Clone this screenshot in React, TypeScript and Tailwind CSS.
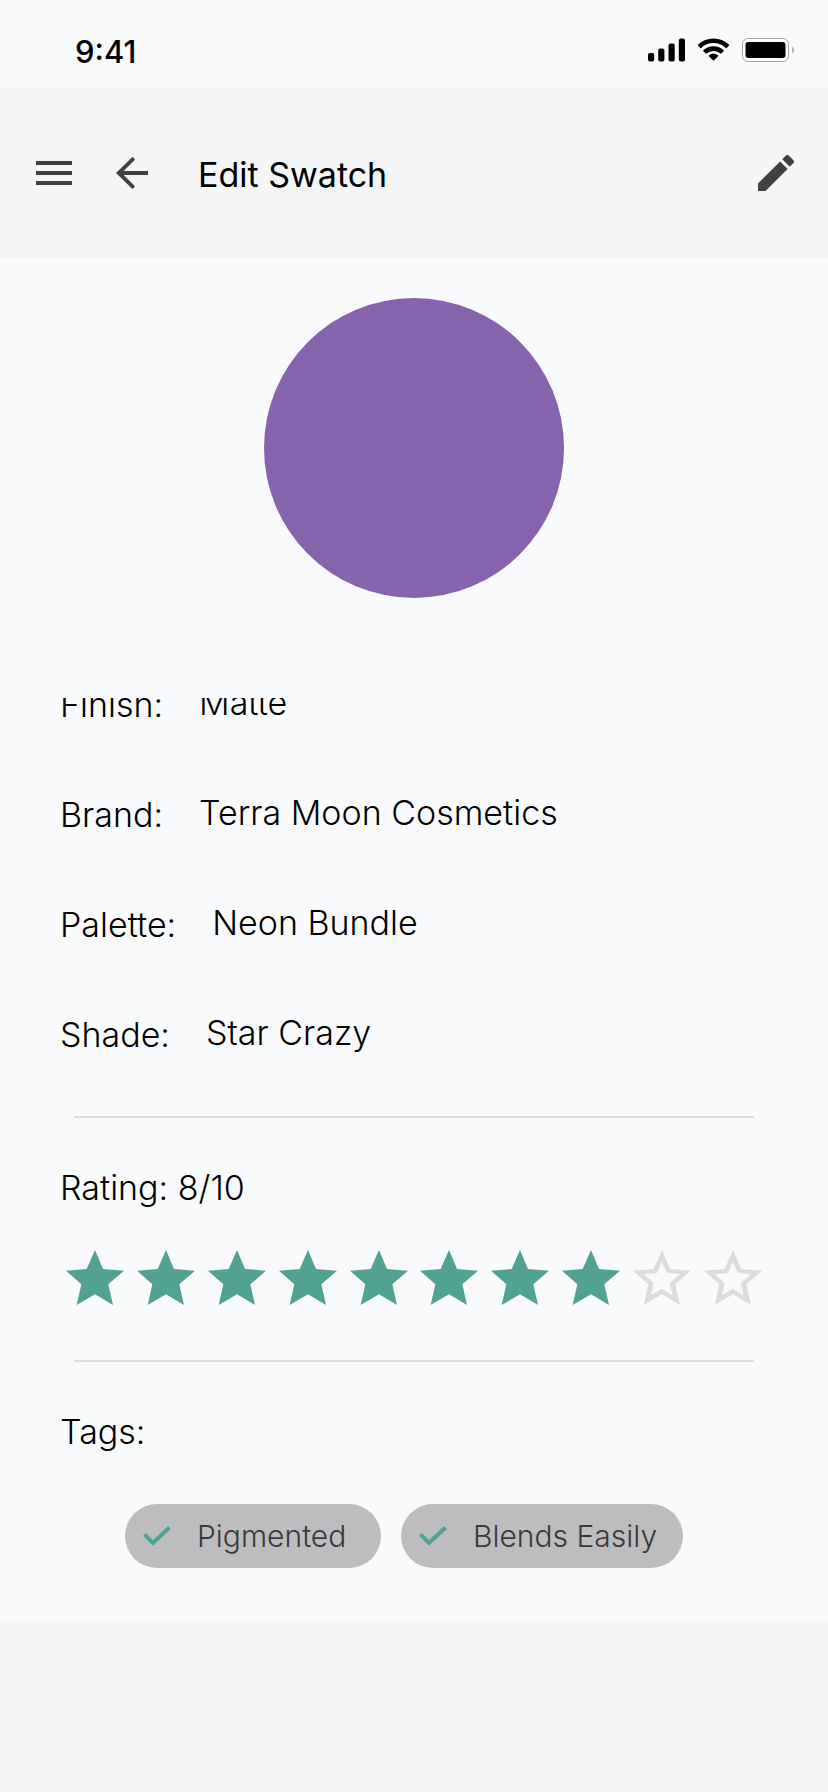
import { useState } from "react";

const STAR = "M87 0 111 57 174 62 127 103 141 165 87 133 32 165 46 103 0 62 62 57Z";
const STAR_HOLE = "M86 36 71 70 32 73 62 99 54 136 86 117 119 136 110 99 142 73 102 68Z";

const details = [
  { label: "Finish:", value: "Matte" },
  { label: "Brand:", value: "Terra Moon Cosmetics" },
  { label: "Palette:", value: "Neon Bundle" },
  { label: "Shade:", value: "Star Crazy" },
];

const tagNames = ["Pigmented", "Blends Easily"];

function Icon({ d }: { d: string }) {
  return (
    <svg viewBox="0 0 24 24" fill="currentColor" aria-hidden="true" className="size-12">
      <path d={d} />
    </svg>
  );
}

function StatusBar() {
  return (
    <div className="flex h-22 items-center justify-between pr-8 pl-[75px]">
      <span className="pt-4 text-[31px] leading-9 font-medium">9:41</span>
      <div className="flex items-center gap-3 pt-3">
        <svg viewBox="0 0 37 24" className="h-6 w-[37px]" aria-label="Signal">
          <rect x="0" y="15" width="6.2" height="8.6" rx="2" />
          <rect x="10.2" y="10.6" width="6.2" height="13" rx="2" />
          <rect x="20.5" y="5.6" width="6.2" height="18" rx="2" />
          <rect x="30.8" y="0.4" width="6.2" height="23.2" rx="2" />
        </svg>
        <svg viewBox="0.5 0 33 24" className="h-6 w-[33px]" aria-label="Wi-Fi">
          <path d="M17 5c4.700 0 9 1.800 12.300 5 .25.240.640.240.880 0l2.350-2.400a.65.65 0 0 0 0-.92 22.300 22.300 0 0 0-31.060 0 .65.65 0 0 0 0 .92L3.820 10c.240.240.63.240.88 0C8 6.800 12.300 5 17 5Z" />
          <path d="M17 13c2.600 0 5 1 6.900 2.600.26.240.65.230.9-.010l2.350-2.400a.66.66 0 0 0-.010-.950 14.800 14.800 0 0 0-20.280 0 .66.66 0 0 0-.010.950l2.350 2.400c.25.240.64.250.9.010A10.400 10.400 0 0 1 17 13Z" />
          <path d="M21.600 18.200c.27-.25.260-.68-.030-.920a7.200 7.200 0 0 0-9.140 0c-.290.240-.3.670-.030.920l4.060 4.100c.3.300.78.300 1.080 0Z" />
        </svg>
        <svg viewBox="0 0 54 26" className="h-[26px] w-[54px]" aria-label="Battery">
          <rect x="0.500" y="1.500" width="46" height="23" rx="5.500" fill="#fff" stroke="#a8a8aa" />
          <rect x="3.500" y="5" width="40" height="16" rx="3" />
          <path d="M50.200 9.500v7c1-.6 1.800-2 1.800-3.500s-.8-2.900-1.800-3.500Z" fill="#a8a8aa" />
        </svg>
      </div>
    </div>
  );
}

function Header() {
  return (
    <header className="flex h-[170px] items-center bg-[#f4f5f7] pr-7 pl-[30px] text-[#414141]">
      <button type="button" aria-label="Menu">
        <Icon d="M3 18h18v-2H3v2zm0-5h18v-2H3v2zm0-7v2h18V6H3z" />
      </button>
      <button type="button" aria-label="Back" className="ml-[30px]">
        <Icon d="M20 11H7.830l5.300-5.300c.3-.3.300-.6 0-.9l-.4-.4c-.3-.3-.6-.3-.9 0L4 12l7.830 7.600c.3.300.6.300.9 0l.4-.4c.3-.3.300-.6 0-.9L7.830 13H20z" />
      </button>
      <h1 className="ml-[42px] grow pt-1 text-[34px] leading-10 font-normal text-black">Edit Swatch</h1>
      <button type="button" aria-label="Edit">
        <Icon d="M3 17.250V21h3.750L17.810 9.940l-3.750-3.750L3 17.250zM20.710 7.040a1 1 0 0 0 0-1.410l-2.340-2.340a1 1 0 0 0-1.410 0l-1.830 1.830 3.750 3.750 1.830-1.830z" />
      </button>
    </header>
  );
}

function Rating() {
  const [rating, setRating] = useState(8);
  return (
    <section>
      <h2 className="px-15 pt-[50px] text-[34px] leading-10 font-light">Rating: {rating}/10</h2>
      <div className="mt-[42px] mb-[55px] flex justify-between px-[66px]">
        {Array.from({ length: 10 }, (_, i) => i + 1).map((n) => (
          <button key={n} type="button" aria-label={`Rate ${n}`} onClick={() => setRating(n)}>
            <svg
              viewBox="0 0 174 165"
              aria-hidden="true"
              className={n <= rating ? "h-[55px] w-[58px] fill-[#52a292]" : "h-[55px] w-[58px] fill-[#dbdcde]"}
            >
              <path fillRule="evenodd" d={n <= rating ? STAR : STAR + STAR_HOLE} />
            </svg>
          </button>
        ))}
      </div>
    </section>
  );
}

function Tags() {
  return (
    <section>
      <h2 className="px-15 pt-[50px] text-[34px] leading-10 font-light">Tags:</h2>
      <div className="mt-[52px] flex flex-wrap gap-5 pr-8 pb-[53px] pl-[125px]">
        {tagNames.map((tag) => (
          <button
            key={tag}
            type="button"
            className="flex h-16 min-w-64 items-center gap-[26px] rounded-full bg-[#bdbdbf] pr-[26px] pl-[18px] text-[30px] leading-9 font-light text-[#39393a]"
          >
            <svg viewBox="0 0 28 20" className="h-5 w-7 text-[#52a292]" aria-hidden="true">
              <path d="M1.500 8.300 10 17 26.500 1.500" fill="none" stroke="currentColor" strokeWidth="4" />
            </svg>
            {tag}
          </button>
        ))}
      </div>
    </section>
  );
}

export default function App() {
  return (
    <div className="flex min-h-screen flex-col bg-[#f4f5f7] font-['Inter','Open_Sans',sans-serif] text-black">
      <div className="bg-[#f8fafc]">
        <StatusBar />
        <Header />
        <main>
          <div className="mx-auto mt-10 size-[300px] rounded-full bg-[#8663ad]" role="img" aria-label="Purple swatch" />
          <div className="mt-[100px] overflow-hidden">
            <dl className="-mt-12 px-15 text-[34px] leading-10 font-light">
              {details.map(({ label, value }) => (
                <div key={label} className="flex h-[110px] items-center gap-9">
                  <dt>{label}</dt>
                  <dd className="pb-1">{value}</dd>
                </div>
              ))}
            </dl>
          </div>
          <hr className="mx-[74px] mt-[26px] border-t-2 border-[#dbdcde]" />
          <Rating />
          <hr className="mx-[74px] border-t-2 border-[#dbdcde]" />
          <Tags />
        </main>
      </div>
    </div>
  );
}
